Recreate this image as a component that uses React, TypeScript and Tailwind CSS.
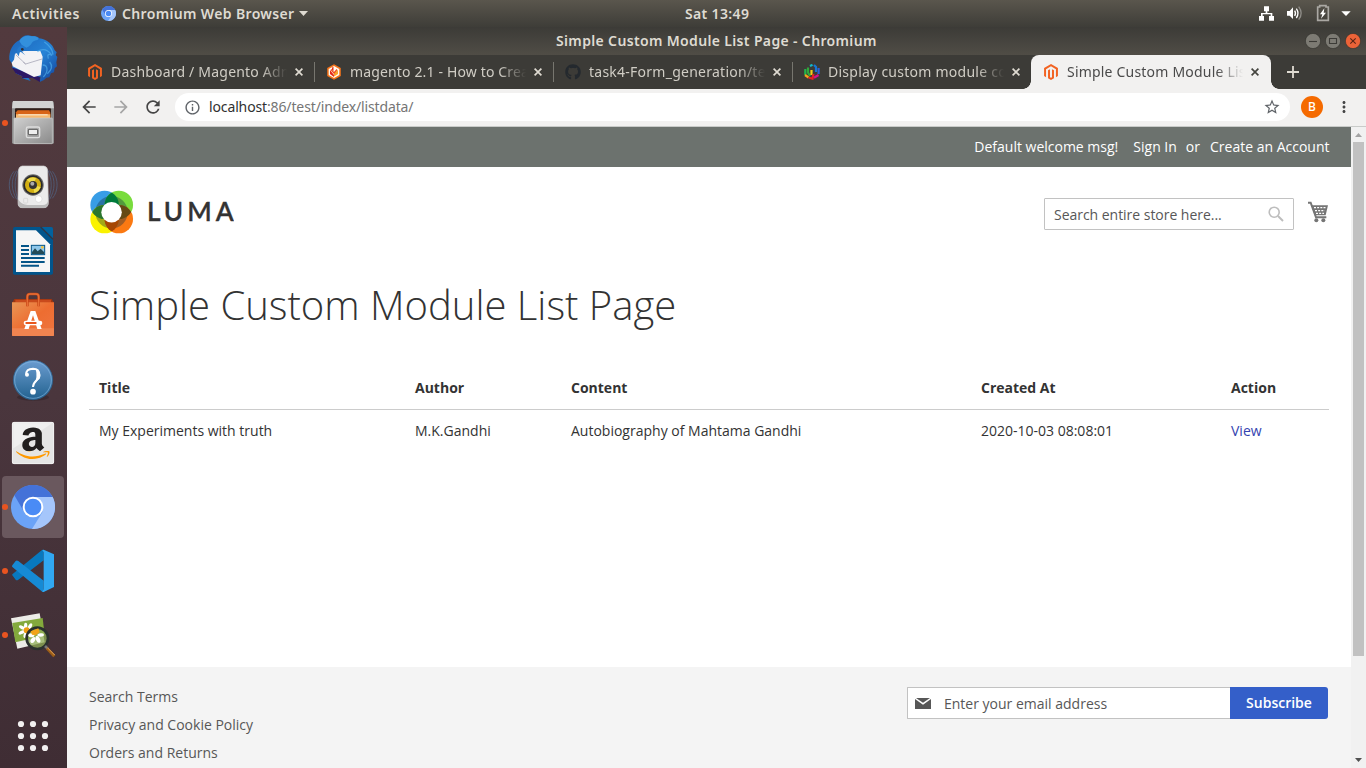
import type { ReactNode } from 'react';
import { FaAmazon, FaGithub, FaMagento } from 'react-icons/fa';
import { MdArrowBack, MdArrowForward, MdRefresh, MdStarBorder, MdInfoOutline, MdMoreVert } from 'react-icons/md';

function ChromiumLogo({ className }: { className?: string }) {
  return (
    <svg viewBox="33 600 132 132" className={className}>
      <circle cx="99" cy="666" r="66" fill="#6ba3f7" />
      <path d="M99 636H158A66 66 0 0 1 96 732L128 680Z" fill="#a5c6fb" />
      <path d="M99 636H158A66 66 0 0 0 43 631L72 680Z" fill="#4472d8" />
      <circle cx="99" cy="666" r="31" fill="#fff" />
      <circle cx="99" cy="666" r="24" fill="#4a8bf5" />
    </svg>
  );
}

function DockItem({ box, running, active, children }: { box: string; running?: boolean; active?: boolean; children: ReactNode }) {
  return (
    <div className="relative h-16 w-[67px] shrink-0">
      {active && <div className="absolute left-[2px] top-px h-[62px] w-[62px] rounded-[4px] bg-[#6a585e]" />}
      {running && <div className="absolute left-[2px] top-[29px] h-[6px] w-[6px] rounded-full bg-[#e95420]" />}
      <svg viewBox={box} width="67" height="64" className="relative block">
        {children}
      </svg>
    </div>
  );
}

function Dock() {
  return (
    <aside className="flex w-[67px] shrink-0 flex-col bg-linear-to-b from-[#523a3e] via-[#4a363d] to-[#3f2d34]">
      <DockItem box="0 6 201 192">
        <defs>
          <linearGradient id="bird" x1="0" y1="0" x2="1" y2="1">
            <stop offset="0" stopColor="#1c62b8" />
            <stop offset=".55" stopColor="#2683d6" />
            <stop offset="1" stopColor="#123f96" />
          </linearGradient>
        </defs>
        <path d="M28 104C26 78 39 54 58 46C65 34 78 27 95 33C108 33 118 37 117 40C142 43 158 59 164 76L170 82L167 90L172 96L169 112L171 124L164 130L162 142L153 145L148 157L139 158L132 165L119 171L122 155L103 158L84 157L92 168L65 159L67 154L47 145L50 140L36 128L39 120Z" fill="url(#bird)" />
        <path d="M35 127L50 132L119 156L120 171L97 158L65 160L67 154L47 145Z" fill="#2b1766" />
        <path d="M45 86L72 78L121 78L128 95L122 151L102 156L38 124L35 113L42 104Z" fill="#f3f3f5" />
        <path d="M47 89L77 117L126 102M77 117L70 112" fill="none" stroke="#99a" strokeWidth="2" />
        <path d="M52 88C48 76 54 66 65 61L77 68L65 79L76 91L60 79L56 94Z" fill="#2478cb" />
        <path d="M58 48C65 34 82 29 96 34C112 32 120 42 112 45C91 47 99 61 79 68L65 59Z" fill="#3390dc" />
        <circle cx="67" cy="73" r="4" fill="#332c2f" />
        <path d="M112 80C131 67 147 79 156 91C145 85 141 88 145 101M133 51C151 63 158 76 159 89M128 120C145 120 145 141 130 156M149 111C160 124 151 138 142 146" fill="none" stroke="#53b0ed" strokeWidth="4" opacity=".65" />
      </DockItem>
      <DockItem box="0 198 201 192" running>
        <defs>
          <linearGradient id="cab" x1="0" y1="0" x2="1" y2="1"><stop stopColor="#d0d0d0" /><stop offset="1" stopColor="#8a8a8a" /></linearGradient>
        </defs>
        <rect x="36" y="229" width="126" height="128" rx="5" fill="#8d8d8d" />
        <path d="M39 228H158L162 250H36Z" fill="#d2d2d2" />
        <rect x="45" y="250" width="108" height="33" rx="3" fill="#301e19" />
        <path d="M48 262L53 256H147L151 263V283H48Z" fill="#d86418" />
        <path d="M48 268H151V279H48Z" fill="#f5b870" />
        <path d="M55 268H143V271H55Z" fill="#fff2dd" />
        <rect x="42" y="279" width="115" height="77" rx="2" fill="url(#cab)" stroke="#cfcfcf" strokeWidth="2" />
        <rect x="79" y="306" width="40" height="32" rx="5" fill="none" stroke="#ddd" strokeWidth="4" />
        <rect x="85" y="313" width="28" height="16" rx="2" fill="#eee" stroke="#555" strokeWidth="3" />
      </DockItem>
      <DockItem box="0 390 201 192">
        <path d="M42 439C22 462 24 500 42 520M50 437C31 463 34 496 50 523M57 432C40 465 43 500 57 530M157 439C177 462 175 500 157 520M149 437C168 463 165 496 149 523M142 432C159 465 156 500 142 530" fill="none" stroke="#50607e" strokeWidth="3" opacity=".8" />
        <path d="M66 423H132Q143 425 143 438L145 533Q144 548 132 548H66Q54 548 54 533L55 438Q56 425 66 423Z" fill="#ebebeb" stroke="#ccc" strokeWidth="2" />
        <path d="M54 523Q65 540 83 540H128Q143 540 145 524V539Q140 549 129 549H66Q55 547 54 538Z" fill="#bcbcbc" />
        <circle cx="99" cy="480" r="32" fill="#666" /><circle cx="99" cy="480" r="29" fill="#292929" />
        <circle cx="99" cy="480" r="24" fill="#d1ae13" />
        <path d="M99 480L80 464Q95 454 108 460ZM99 480L122 486Q116 501 103 504Z" fill="#eedb4c" />
        <circle cx="99" cy="480" r="12" fill="#333" /><circle cx="97" cy="476" r="6" fill="#aaa" />
        <circle cx="116" cy="522" r="10" fill="#fff" stroke="#bbb" />
        <rect x="71" y="520" width="12" height="14" rx="2" fill="none" stroke="#d0d0d0" strokeWidth="2" />
      </DockItem>
      <DockItem box="0 582 201 192">
        <path d="M45 606H122L159 643V744Q159 749 154 749H44Q39 749 39 744V612Q39 606 45 606Z" fill="#01558c" />
        <path d="M124 606H154Q159 606 159 611V642Z" fill="#02629e" />
        <path d="M122 606L159 643" stroke="#2f3848" strokeWidth="4" />
        <path d="M48 616H108L150 658V741H48Z" fill="#f6f6f6" />
        <path d="M63 663H87M63 675H87M63 687H87M63 699H134M63 711H134M63 722H117" stroke="#055588" strokeWidth="6" />
        <rect x="94" y="661" width="40" height="28" fill="#8fc7ea" stroke="#055588" strokeWidth="3" />
        <path d="M96 687V681L105 670L113 679L122 671L132 681V687Z" fill="#244b57" /><circle cx="127" cy="667" r="4" fill="#f5c23c" />
      </DockItem>
      <DockItem box="0 -6 201 192">
        <defs><linearGradient id="bag" x1="0" y1="0" x2="1" y2="1"><stop stopColor="#e99655" /><stop offset=".5" stopColor="#ed6d31" /><stop offset="1" stopColor="#ef7540" /></linearGradient></defs>
        <path d="M43 42H155L162 54H36Z" fill="#9c3510" />
        <path d="M46 44H153V53H46Z" fill="#c94a1c" />
        <path d="M36 52H162V150Q162 153 159 153H39Q36 153 36 150Z" fill="url(#bag)" />
        <path d="M36 130H162V150Q162 153 159 153H39Q36 153 36 150Z" fill="#f08450" />
        <path d="M82 64V35Q82 27 90 27H108Q116 27 116 35V64" fill="none" stroke="#c84616" strokeWidth="8" />
        <path d="M82 64V35Q82 27 90 27H108Q116 27 116 35V64" fill="none" stroke="#e66e35" strokeWidth="4" />
        <path d="M92 78H106L125 132H112L99 91L86 132H73Z" fill="#fff" />
        <rect x="71" y="107" width="56" height="14" rx="7" fill="#fff" /><rect x="76" y="111" width="34" height="6" rx="3" fill="#e9571d" />
      </DockItem>
      <DockItem box="0 186 201 192">
        <defs><linearGradient id="help" x1="0" y1="0" x2="0" y2="1"><stop stopColor="#6b9cd0" /><stop offset="1" stopColor="#22628f" /></linearGradient></defs>
        <ellipse cx="99" cy="337" rx="48" ry="10" fill="#332429" opacity=".6" />
        <circle cx="99" cy="285" r="59" fill="url(#help)" stroke="#2a6594" strokeWidth="2" />
        <circle cx="99" cy="285" r="55" fill="none" stroke="#84b5df" strokeWidth="3" opacity=".65" />
        <path d="M79 269Q77 252 99 251Q118 251 118 270C118 286 99 287 99 306" fill="none" stroke="#fff" strokeWidth="6" />
        <path d="M107 251Q127 262 119 281L104 294Q113 276 107 251Z" fill="#fff" />
        <circle cx="81" cy="269" r="6" fill="#fff" /><circle cx="99" cy="320" r="8.500" fill="#fff" />
      </DockItem>
      <DockItem box="0 378 201 192">
        <defs><linearGradient id="amz" gradientUnits="userSpaceOnUse" x1="0" y1="0" x2="0" y2="512"><stop offset=".715" stopColor="#221f1f" /><stop offset=".715" stopColor="#ff9900" /></linearGradient></defs>
        <rect x="36" y="411" width="126" height="126" rx="5" fill="#e5e5e5" />
        <path d="M40 415H157L40 490Z" fill="#f0f0f0" />
        <rect x="37" y="412" width="124" height="124" rx="5" fill="none" stroke="#f8f8f8" strokeWidth="2" />
        <g transform="translate(39 421) scale(1.1 1)">
          <FaAmazon size={108} color="#221f1f" fill="url(#amz)" />
        </g>
      </DockItem>
      <DockItem box="0 570 201 192" running active>
        <svg x="33" y="600" width="132" height="132" viewBox="33 600 132 132">
          <circle cx="99" cy="666" r="66" fill="#6ba3f7" />
          <path d="M99 636H158A66 66 0 0 1 96 732L128 680Z" fill="#a5c6fb" />
          <path d="M99 636H158A66 66 0 0 0 43 631L72 680Z" fill="#4472d8" />
          <circle cx="99" cy="666" r="31" fill="#fff" /><circle cx="99" cy="666" r="25" fill="#4a8bf5" />
        </svg>
      </DockItem>
      <DockItem box="0 -3 201 192" running>
        <path d="M37 106L47 119Q50 122 55 119L131 61V30Q128 28 125 31L38 102Q35 104 37 106Z" fill="#0878be" />
        <path d="M37 76L47 63Q50 60 55 63L131 122V155Q128 157 125 154L38 82Q34 79 37 76Z" fill="#168ad4" />
        <path d="M127 30L131 29L162 43V141L131 156L127 155L131 148V37Z" fill="#31a8f2" />
      </DockItem>
      <DockItem box="0 189 201 192" running>
        <path d="M33 235L119 220L134 307L52 326Z" fill="#ecece7" />
        <path d="M37 249L128 234L134 287L46 307Z" fill="#83a93c" />
        <g fill="#fff">
          <ellipse cx="67" cy="263" rx="11" ry="5" transform="rotate(25 67 263)" /><ellipse cx="77" cy="258" rx="5" ry="10" /><ellipse cx="90" cy="259" rx="5" ry="10" transform="rotate(30 90 259)" /><ellipse cx="66" cy="277" rx="11" ry="5" transform="rotate(-25 66 277)" /><ellipse cx="76" cy="284" rx="5" ry="10" transform="rotate(15 76 284)" />
        </g>
        <circle cx="80" cy="271" r="9" fill="#ee9b13" />
        <circle cx="112" cy="295" r="32" fill="#8fad55" fillOpacity=".75" stroke="#2a302d" strokeWidth="8" />
        <g fill="#fff"><ellipse cx="94" cy="286" rx="9" ry="6" /><ellipse cx="99" cy="300" rx="6" ry="10" transform="rotate(35 99 300)" /><ellipse cx="114" cy="298" rx="6" ry="11" transform="rotate(-25 114 298)" /><ellipse cx="122" cy="285" rx="10" ry="5" transform="rotate(-5 122 285)" /></g>
        <path d="M92 274L115 265L119 277L107 286L96 284Z" fill="#f2a318" />
        <path d="M135 318L143 326" stroke="#777" strokeWidth="8" /><path d="M141 325L163 349" stroke="#9b5d17" strokeWidth="9" /><path d="M142 323L164 345" stroke="#e4a35a" strokeWidth="3" />
      </DockItem>
      <div className="mt-auto">
        <DockItem box="0 492 201 192">
          {[552, 588, 624].map((y) => [63, 99, 135].map((x) => <circle key={`${x}-${y}`} cx={x} cy={y} r="9.3" fill="#f2f0f0" />))}
        </DockItem>
      </div>
    </aside>
  );
}

function TopBar() {
  return (
    <header className="flex h-[27px] shrink-0 items-center bg-linear-to-b from-[#5a564d] to-[#3e3d38] pl-3 font-['Noto_Sans','Open_Sans',sans-serif] text-[14px] font-semibold leading-[27px] text-[#dfdbd2]">
      <span className="w-[89px] whitespace-nowrap tracking-[0.55px]">Activities</span>
      <ChromiumLogo className="h-[15px] w-[15px]" />
      <span className="ml-[6px] w-[177px] whitespace-nowrap tracking-[0.35px]">Chromium Web Browser</span>
      <svg viewBox="0 0 9 5" className="h-[5px] w-[9px]"><path d="M0 0H9L4.500 5Z" fill="#dfdbd2" /></svg>
      <span className="ml-[377px] w-[70px] whitespace-nowrap tracking-[0.35px]">Sat 13:49</span>
      <svg viewBox="714 9 282 63" className="ml-[503px] h-[21px] w-[94px]">
        <path d="M732 19H747V34H742V39H757V48H762V62H747V48H752V43H728V48H732V62H717V48H723V39H737V34H732Z" fill="#fff" />
        <path d="M801 33H809L819 22V57L809 47H801Z" fill="#fff" />
        <path d="M824 32Q829 40 824 48M829 26Q839 40 829 54" fill="none" stroke="#fff" strokeWidth="4" />
        <path d="M836 20Q851 40 836 59" fill="none" stroke="#8f8d88" strokeWidth="4" />
        <path d="M893 21H899V17H918V21H925V61H893Z" fill="none" stroke="#aaa8a3" strokeWidth="5" />
        <path d="M913 25L900 43H907L903 56L918 38H911Z" fill="#fff" />
        <path d="M964 34H992L978 48Z" fill="#fff" />
      </svg>
    </header>
  );
}

function WindowButton({ kind }: { kind: 'min' | 'max' | 'close' }) {
  return (
    <svg viewBox="0 0 16 16" className="h-4 w-4">
      <circle cx="8" cy="8" r="7.600" fill={kind === 'close' ? '#ec6338' : '#7d7b74'} stroke="#33322e" strokeWidth=".6" />
      <path
        d={kind === 'min' ? 'M4 8.500H12' : kind === 'max' ? 'M4.500 5.500H11.500V10.500H4.500Z' : 'M5.300 5.300L10.700 10.700M10.700 5.300L5.300 10.700'}
        fill="none"
        stroke={kind === 'close' ? '#5a2415' : '#3c3b37'}
        strokeWidth="1.100"
      />
    </svg>
  );
}

function HexFavicon() {
  return (
    <svg viewBox="0 0 16 16" className="h-4 w-4">
      <path d="M8 .3L14.800 4V12L8 15.700L1.200 12V4Z" fill="#f4731a" />
      <path d="M8 2L13.300 5V11L8 14L2.700 11V5Z" fill="#fffaf0" />
      <path d="M6 3.500L7.500 3V7L6 6ZM4 6L8 11L8 13L4 10Z" fill="#e32a1a" />
      <path d="M8 9L12 6V10L8 12.500Z" fill="#f9a62b" />
      <path d="M5 5.500L8 9L11 5.500" fill="none" stroke="#ef4a1c" strokeWidth="1.200" />
    </svg>
  );
}

function ColorFavicon() {
  return (
    <svg viewBox="0 0 16 16" className="h-4 w-4" fill="none" strokeWidth="2.200">
      <path d="M1.300 5V11" stroke="#23b44a" /><path d="M4 3.500V8.500L6 12" stroke="#31a83b" /><path d="M6 2L8.500 .8" stroke="#13b8c9" />
      <path d="M10 1L12 3V8" stroke="#1676d5" /><path d="M14.600 4V10" stroke="#2a62d9" /><path d="M7.500 6V11" stroke="#f0d31a" />
      <path d="M1 11L4.500 13.500" stroke="#f3a41b" /><path d="M4.500 13.500L8.500 14.700L9.500 10" stroke="#e62222" /><path d="M10 13.800L14.500 11" stroke="#d3148c" />
    </svg>
  );
}

function CloseGlyph({ dark }: { dark?: boolean }) {
  return (
    <svg viewBox="0 0 8 8" className="h-2 w-2"><path d="M.6 .6L7.400 7.400M7.400 .6L.6 7.400" stroke={dark ? '#45453f' : '#dfdbd2'} strokeWidth="1.700" /></svg>
  );
}

const titleFade = 'ml-2 w-[178px] overflow-hidden whitespace-nowrap mask-[linear-gradient(to_right,black_84%,transparent_99%)]';

const tabs = [
  { title: 'Dashboard / Magento Admin', icon: <FaMagento className="h-4 w-4 text-[#f26322]" />, tracking: 'tracking-[0.2px]' },
  { title: 'magento 2.1 - How to Create', icon: <HexFavicon />, tracking: 'tracking-[0.15px]' },
  { title: 'task4-Form_generation/test', icon: <FaGithub className="h-4 w-4 text-[#24292e]" />, tracking: 'tracking-[0.25px]' },
  { title: 'Display custom module collection', icon: <ColorFavicon />, tracking: 'tracking-[0.25px]' },
];

function TabStrip() {
  return (
    <div className="flex h-[34px] bg-[#3c3b37] pl-2 font-['Noto_Sans','Open_Sans',sans-serif] text-[14px] leading-[34px]">
      {tabs.map((tab, i) => (
        <div key={tab.title} className="relative flex w-[239px] items-center pl-3 text-[#d0cdc5]">
          {tab.icon}
          <span className={`${titleFade} ${tab.tracking}`}>{tab.title}</span>
          <span className="ml-[6px]"><CloseGlyph /></span>
          {i < 3 && <span className="-mr-px ml-auto h-5 w-px bg-[#77766f]" />}
        </div>
      ))}
      <div className="relative flex w-[240px] items-center rounded-t-[8px] bg-[#f2f1f0] pl-3 text-[#4a4a4a]">
        <div className="absolute -left-2 bottom-0 h-2 w-2 bg-[radial-gradient(circle_at_0_0,transparent_7.500px,#f2f1f0_8px)]" />
        <div className="absolute -right-2 bottom-0 h-2 w-2 bg-[radial-gradient(circle_at_100%_0,transparent_7.500px,#f2f1f0_8px)]" />
        <FaMagento className="h-4 w-4 text-[#f26322]" />
        <span className={`${titleFade} tracking-[0.2px]`}>Simple Custom Module List Page</span>
        <span className="ml-[6px]"><CloseGlyph dark /></span>
      </div>
      <div className="flex w-[44px] items-center justify-center">
        <svg viewBox="0 0 12 12" className="h-3 w-3"><path d="M6 0V12M0 6H12" stroke="#dfdbd2" strokeWidth="1.800" /></svg>
      </div>
    </div>
  );
}

function Toolbar() {
  return (
    <div className="flex h-[38px] items-center border-b border-[#c9cbc9] bg-[#f2f1f0] pb-px pl-3">
      <MdArrowBack className="h-5 w-5 text-[#454545]" />
      <MdArrowForward className="ml-3 h-5 w-5 text-[#a5a5a5]" />
      <MdRefresh className="ml-3 h-5 w-5 text-[#454545]" />
      <div className="ml-3 flex h-7 w-[1115px] items-center rounded-full bg-white pl-[9px] pr-[9px] font-['Noto_Sans','Open_Sans',sans-serif] text-[14px] text-[#757575]">
        <MdInfoOutline className="h-[17px] w-[17px] text-[#5f6368]" />
        <span className="ml-2 whitespace-nowrap pb-[2px] tracking-[-0.13px]"><span className="text-[#303030]">localhost</span>:86/test/index/listdata/</span>
        <MdStarBorder className="ml-auto h-[18px] w-[18px] text-[#5f6368]" />
      </div>
      <div className="ml-[11px] flex h-[22px] w-[22px] items-center justify-center rounded-full bg-[#f56a00] font-['Noto_Sans',sans-serif] text-[12px] font-medium text-white">B</div>
      <MdMoreVert className="ml-3 h-[18px] w-[18px] text-[#454545]" />
    </div>
  );
}

function LumaLogo() {
  return (
    <svg viewBox="67 58 434 133" className="block h-[44px] w-[145px]">
      <defs>
        <clipPath id="topLeft"><circle cx="112" cy="103" r="43" /></clipPath>
        <clipPath id="bottomRight"><circle cx="155" cy="146" r="43" /></clipPath>
      </defs>
      <circle cx="112" cy="103" r="43" fill="#389de6" /><circle cx="155" cy="103" r="43" fill="#79dc3d" />
      <circle cx="112" cy="146" r="43" fill="#faf200" /><circle cx="155" cy="146" r="43" fill="#fb7912" />
      <circle cx="133" cy="125" r="49" fill="#123040" opacity=".38" />
      <g clipPath="url(#topLeft)"><circle cx="155" cy="103" r="43" fill="#007a3b" /><circle cx="112" cy="146" r="43" fill="#2b762d" /></g>
      <g clipPath="url(#bottomRight)"><circle cx="155" cy="103" r="43" fill="#654914" /><circle cx="112" cy="146" r="43" fill="#a64702" /></g>
      <circle cx="133" cy="125" r="31" fill="#fff" />
      <text x="240" y="152" textLength="262" fontSize="79" fontFamily="Lato, sans-serif" fontWeight="600" fill="#333" stroke="#333" strokeWidth="1">LUMA</text>
    </svg>
  );
}

function StorePage() {
  return (
    <main className="flex min-w-0 flex-1 flex-col bg-white font-['Open_Sans','Noto_Sans',sans-serif] text-[14px] leading-5 text-[#333]">
      <div className="flex h-10 shrink-0 items-center justify-end bg-[#6c726e] pr-[22px] text-white">
        <span>Default welcome msg!</span>
        <span className="ml-[15px]">Sign In</span>
        <span className="ml-[9px]">or</span>
        <span className="ml-[10px] -mr-px w-[120px] whitespace-nowrap">Create an Account</span>
      </div>
      <div className="flex h-[116px] shrink-0 items-start pl-[22px] pr-[22px]">
        <div className="mt-[23px]"><LumaLogo /></div>
        <div className="ml-auto mt-[31px] flex h-8 w-[250px] items-center justify-between rounded-[1px] border border-[#c2c2c2] pl-[9px] pr-[9px] text-[#575757]">
          <span className="pt-[2px] tracking-[-0.03px]">Search entire store here...</span>
          <svg viewBox="0 0 16 16" className="h-4 w-4"><circle cx="6.200" cy="6.200" r="5" fill="none" stroke="#bdbdbd" strokeWidth="1.600" /><path d="M10 10L15 15" stroke="#bdbdbd" strokeWidth="2" /></svg>
        </div>
        <svg viewBox="862 604 64 66" className="ml-[13px] mt-[34px] h-[22px] w-[22px]" fill="none" stroke="#757575">
          <path d="M864 609H872L888 653H919" strokeWidth="6" />
          <path d="M874 617H924L917 647H884Z" fill="#757575" stroke="none" />
          <path d="M882 624H917M885 633H914M888 641H912" stroke="#fff" strokeWidth="4" strokeDasharray="6 3.500" />
          <circle cx="889" cy="662" r="6" fill="#757575" stroke="none" /><circle cx="910" cy="662" r="6" fill="#757575" stroke="none" />
        </svg>
      </div>
      <h1 className="h-[84px] shrink-0 pl-[22px] text-[40px] font-light leading-[44px]">Simple Custom Module List Page</h1>
      <table className="mx-[22px] w-[1240px] table-fixed border-collapse text-left">
        <colgroup><col className="w-[316px]" /><col className="w-[156px]" /><col className="w-[410px]" /><col className="w-[250px]" /><col className="w-[108px]" /></colgroup>
        <thead>
          <tr className="border-b border-[#ccc]">
            {['Title', 'Author', 'Content', 'Created At', 'Action'].map((h) => <th key={h} className="px-[10px] py-[11px] font-bold">{h}</th>)}
          </tr>
        </thead>
        <tbody>
          <tr>
            {['My Experiments with truth', 'M.K.Gandhi', 'Autobiography of Mahtama Gandhi', '2020-10-03 08:08:01'].map((c) => <td key={c} className="px-[10px] py-[11px]">{c}</td>)}
            <td className="px-[10px] py-[11px]"><a className="text-[#3443b0]">View</a></td>
          </tr>
        </tbody>
      </table>
      <footer className="mt-auto flex h-[101px] shrink-0 justify-between bg-[#f4f4f4] pl-[22px] pr-[23px] pt-5 text-[#575757]">
        <ul className="flex flex-col gap-2">
          <li>Search Terms</li><li>Privacy and Cookie Policy</li><li>Orders and Returns</li>
        </ul>
        <div className="flex h-8">
          <div className="flex w-[323px] items-center rounded-l-[1px] border border-r-0 border-[#c2c2c2] bg-white pl-[7px]">
            <svg viewBox="105 144 48 33" className="h-[11px] w-4"><path d="M105 147L129 164L153 147V177H105Z" fill="#575757" /><path d="M108 144H150L129 158Z" fill="#575757" /></svg>
            <span className="ml-[13px] pt-[2px]">Enter your email address</span>
          </div>
          <button className="w-[98px] rounded-r-[3px] bg-[#345fc9] text-center font-semibold text-white">Subscribe</button>
        </div>
      </footer>
    </main>
  );
}

function Scrollbar() {
  return (
    <div className="flex w-[15px] shrink-0 flex-col items-center bg-[#f1f1f1]">
      <svg viewBox="0 0 15 15" className="h-[15px] w-[15px]"><path d="M4 10H11L7.500 6Z" fill="#a3a3a3" /></svg>
      <div className="h-[514px] w-[11px] bg-[#c1c1c1]" />
      <svg viewBox="0 0 15 15" className="mt-auto h-[15px] w-[15px]"><path d="M4 5H11L7.500 9Z" fill="#505050" /></svg>
    </div>
  );
}

export default function App() {
  return (
    <div className="flex h-[768px] w-[1366px] flex-col overflow-hidden">
      <TopBar />
      <div className="flex min-h-0 flex-1">
        <Dock />
        <div className="flex min-w-0 flex-1 flex-col">
          <div className="flex h-7 items-center bg-linear-to-b from-[#3c3b37] to-[#504d46] pr-[5px] font-['Noto_Sans','Open_Sans',sans-serif] text-[14px] font-semibold text-[#dfdbd2]">
            <span className="ml-[489px] whitespace-nowrap pb-[2px] tracking-[0.35px]">Simple Custom Module List Page - Chromium</span>
            <div className="ml-auto flex gap-1"><WindowButton kind="min" /><WindowButton kind="max" /><WindowButton kind="close" /></div>
          </div>
          <TabStrip />
          <Toolbar />
          <div className="flex min-h-0 flex-1">
            <StorePage />
            <Scrollbar />
          </div>
        </div>
      </div>
    </div>
  );
}
